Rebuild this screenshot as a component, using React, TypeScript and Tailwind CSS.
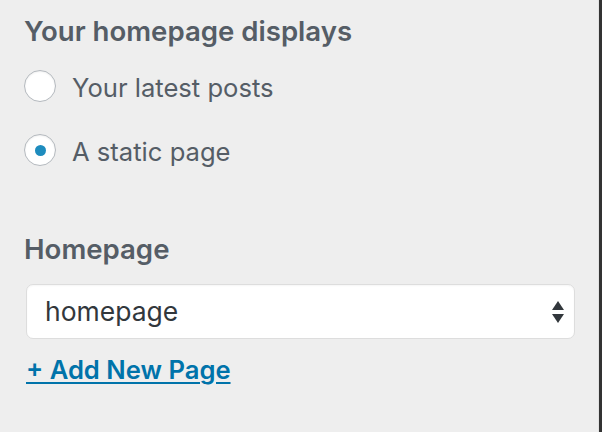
import { useState } from 'react';

export default function App() {
  const [choice, setChoice] = useState<'posts' | 'page'>('page');

  return (
    <div className="flex h-[432px] w-[602px] bg-[#eeeeee] font-['Inter','Liberation_Sans',sans-serif]">
      <div className="flex-1 pl-6 pt-[15px]">
        <h3 className="text-[27.6px] font-semibold leading-[32px] text-[#555d66]">Your homepage displays</h3>

        <div className="mt-[23px] flex flex-col gap-[32px]">
          {([
            ['posts', 'Your latest posts'],
            ['page', 'A static page'],
          ] as const).map(([key, label]) => (
            <label key={key} className="flex h-[32px] cursor-pointer items-start gap-[16px]" onClick={() => setChoice(key)}>
              <span className="flex h-[32px] w-[32px] items-center justify-center rounded-full border-[1.5px] border-[#b4b9be] bg-white shadow-[inset_0_1px_2px_rgba(0,0,0,0.07)]">
                {choice === key && <span className="h-[11px] w-[11px] rounded-full bg-[#1e8cbe]" />}
              </span>
              <span className="text-[25.6px] leading-[35px] text-[#555d66]">{label}</span>
            </label>
          ))}
        </div>

        <h3 className="mt-[67px] text-[27.6px] font-semibold leading-[32px] text-[#555d66]">Homepage</h3>

        <div className="ml-[2px] mt-[19px] flex h-[55px] w-[549px] items-center justify-between rounded-[7px] border border-[#dddddd] bg-white pl-[18px] pr-[9px] shadow-[inset_0_1px_2px_rgba(0,0,0,0.04)]">
          <span className="text-[26.5px] text-[#32373c]">homepage</span>
          <svg width="14" height="24" viewBox="0 0 14 24" className="text-[#32373c]">
            <path d="M7 1 L13 10 L1 10 Z" fill="currentColor" />
            <path d="M1 14 L13 14 L7 23 Z" fill="currentColor" />
          </svg>
        </div>

        <a href="#" className="ml-[2px] mt-[17px] inline-block text-[25.6px] font-semibold leading-[28px] text-[#0073aa] underline decoration-2 underline-offset-[3px]">
          + Add New Page
        </a>
      </div>
      <div className="w-px bg-[#e2e2e2]" />
      <div className="w-[3px] bg-[#333333]" />
    </div>
  );
}
